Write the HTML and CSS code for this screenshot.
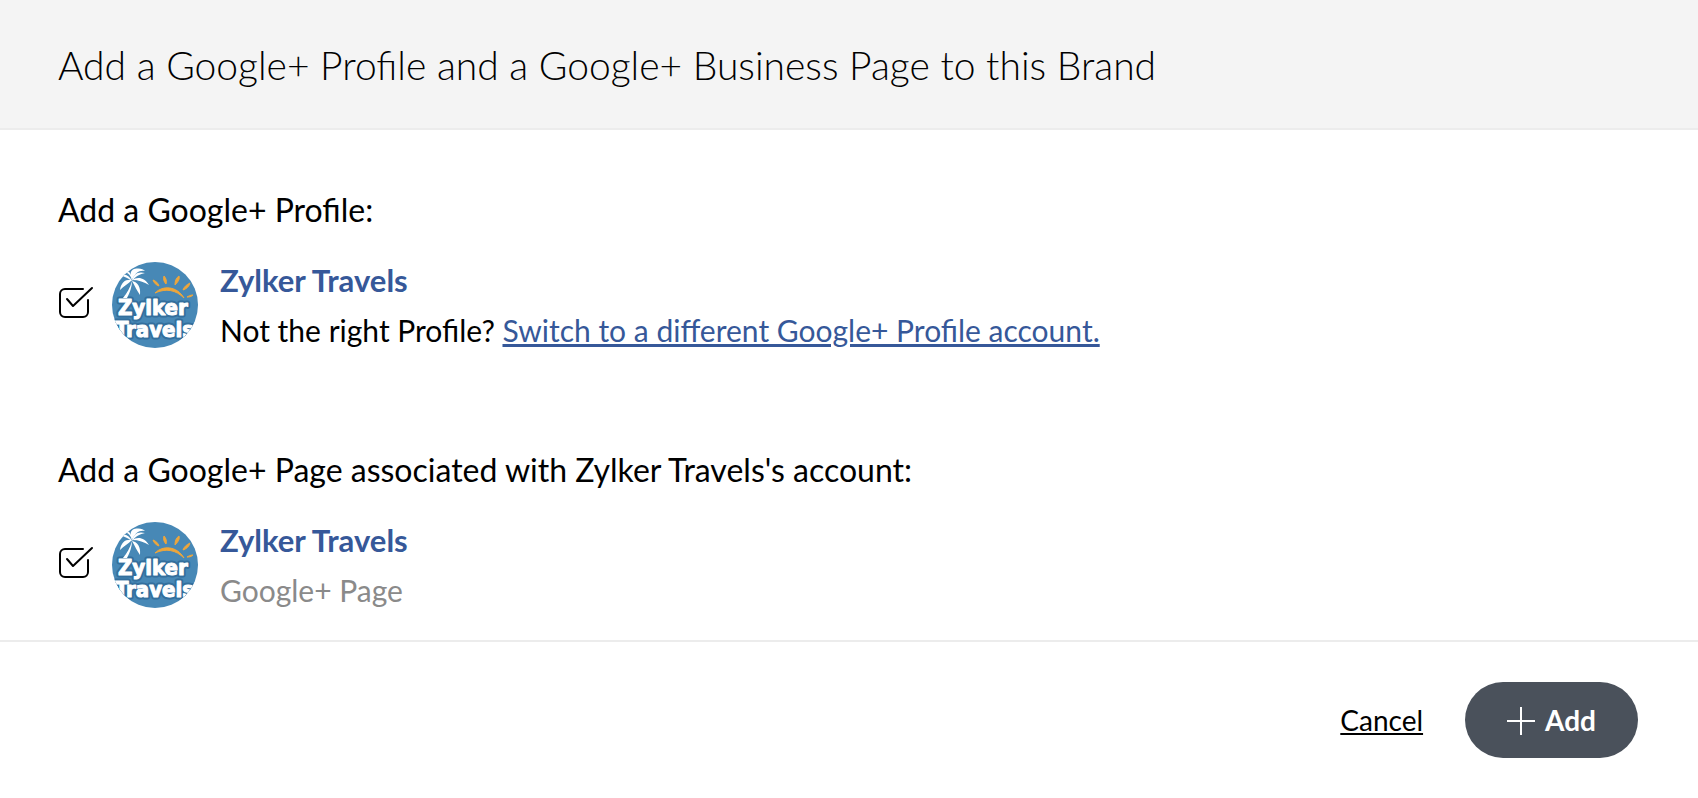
FILE: index.html
```html
<!DOCTYPE html>
<html lang="en">
<head>
    <meta charset="UTF-8">
    <meta name="viewport" content="width=device-width, initial-scale=1.0">
    <title>Add a Google+ Profile</title>
    <link rel="stylesheet" href="styles.css">
</head>
<body>
    <!-- Shared brand logo -->
    <svg class="symbols" aria-hidden="true">
        <symbol id="zylker-logo" viewBox="0 0 86 86">
            <rect width="86" height="86" fill="#4788b6"/>
            <g class="logo-shade">
                <text x="6" y="53">Zylker</text>
                <text x="3" y="75">Travels</text>
            </g>
            <g fill="#fff">
                <path d="M20 19C17 13 12 11 8 14c4 0 8 2 12 5z"/>
                <path d="M20 19C21 12 26 9 33 11c-5 1-9 3-13 8z"/>
                <path d="M20 18C18 12 18 9 22 7c6-1 9 0 11 2-6-1-10 2-13 9z"/>
                <path d="M20 18c-2-6-5-8-9-8 3-3 9 0 9 8z"/>
                <path d="M20 18c6-4 13-2 17 5-5-3-10-5-17-5z"/>
                <path d="M20 19c5 1 9 5 8 14-3-4-5-9-8-14z"/>
                <path d="M20 18C14 17 9 20 8 28c4-4 8-6 12-10z"/>
                <path d="M20 19c0 6-2 11-5 17h-4c4-5 7-10 9-17z"/>
            </g>
            <g fill="#eda63c" stroke="#eda63c" stroke-linejoin="round">
                <path d="M43 31c8-8 22-7 29 5-8-8-18-10-29-5z"/>
                <path d="M41 18c3 1 5 3 6 6-3-1-5-3-6-6z"/>
                <path d="M52 14c2 2 3 5 2 8-2-2-3-5-2-8z"/>
                <path d="M67 14c1 3-1 6-4 9 0-4 1-7 4-9z"/>
                <path d="M78 21c-1 4-4 6-7 7 1-3 3-5 7-7z"/>
                <path d="M81 33c-2 2-4 2-6 2 2-1 3-2 6-2z"/>
            </g>
            <g class="logo-text">
                <text x="6" y="53">Zylker</text>
                <text x="3" y="75">Travels</text>
            </g>
        </symbol>
    </svg>

    <header class="header">
        <h1>Add a Google+ Profile and a Google+ Business Page to this Brand</h1>
    </header>

    <main class="content">
        <section>
            <h2>Add a Google+ Profile:</h2>
            <div class="account">
                <span class="check">
                    <input type="checkbox" id="profile" checked>
                    <svg viewBox="0 0 36 38" aria-hidden="true">
                        <path d="M25 3H7a5 5 0 0 0-5 5v18a5 5 0 0 0 5 5h18a5 5 0 0 0 5-5V14"/>
                        <path class="tick" d="M9 13l6 7L34 2"/>
                    </svg>
                </span>
                <svg class="avatar" role="img" aria-label="Zylker Travels"><use href="#zylker-logo"/></svg>
                <div class="info">
                    <label class="name" for="profile">Zylker Travels</label>
                    <p>Not the right Profile? <a href="#">Switch to a different Google+ Profile account.</a></p>
                </div>
            </div>
        </section>

        <section>
            <h2>Add a Google+ Page associated with Zylker Travels's account:</h2>
            <div class="account">
                <span class="check">
                    <input type="checkbox" id="page" checked>
                    <svg viewBox="0 0 36 38" aria-hidden="true">
                        <path d="M25 3H7a5 5 0 0 0-5 5v18a5 5 0 0 0 5 5h18a5 5 0 0 0 5-5V14"/>
                        <path class="tick" d="M9 13l6 7L34 2"/>
                    </svg>
                </span>
                <svg class="avatar" role="img" aria-label="Zylker Travels"><use href="#zylker-logo"/></svg>
                <div class="info">
                    <label class="name" for="page">Zylker Travels</label>
                    <p class="type">Google+ Page</p>
                </div>
            </div>
        </section>
    </main>

    <footer class="footer">
        <a class="cancel" href="#">Cancel</a>
        <button class="add-button" type="button">
            <svg viewBox="0 0 28 28" aria-hidden="true"><path d="M0 15h28M14 1v28"/></svg>
            Add
        </button>
    </footer>
</body>
</html>
```

FILE: styles.css
```css
body {
    font-family: Lato, sans-serif;
    margin: 0;
    background-color: #fff;
    color: #000;
}

h1,
h2,
p {
    margin: 0;
    font-weight: 400;
}

.symbols {
    display: none;
}

.header {
    padding: 41px 58px 39px;
    background-color: #f4f4f4;
    border-bottom: 2px solid #ececec;
}

h1 {
    font-size: 39px;
    line-height: 48px;
    font-weight: 300;
}

.content {
    display: flex;
    flex-direction: column;
    gap: 95px;
    padding: 60px 58px 25px;
    border-bottom: 2px solid #ececec;
}

h2 {
    margin-bottom: 25px;
    font-size: 32px;
    line-height: 40px;
}

.account {
    display: flex;
    align-items: center;
}

/* Checkbox with its drawn box on top */
.check {
    display: grid;
    flex: none;
    width: 36px;
    height: 38px;
    margin-right: 18px;
}

.check input,
.check svg {
    grid-area: 1 / 1;
    width: 36px;
    height: 38px;
    margin: 0;
}

.check input {
    appearance: none;
    cursor: pointer;
}

.check svg {
    fill: none;
    stroke: #000;
    stroke-width: 2;
    stroke-linecap: round;
    stroke-linejoin: round;
    pointer-events: none;
}

.check input:not(:checked) + svg .tick {
    display: none;
}

.avatar {
    flex: none;
    width: 86px;
    height: 86px;
    margin-right: 22px;
    border-radius: 50%;
}

.logo-text,
.logo-shade {
    font-family: "DejaVu Sans Condensed", "DejaVu Sans", sans-serif;
    font-size: 22px;
    font-weight: 700;
    stroke-linejoin: round;
}

.logo-text {
    fill: #fff;
    stroke: #fff;
    stroke-width: 1;
}

.logo-shade {
    fill: #336f9d;
    stroke: #336f9d;
    stroke-width: 5;
}

.info {
    font-size: 30px;
    line-height: 50px;
}

.name {
    display: block;
    color: #365899;
    font-size: 31px;
    font-weight: 700;
    cursor: pointer;
}

.info a {
    color: #365899;
}

.type {
    color: #8a8a8a;
}

.footer {
    display: flex;
    justify-content: flex-end;
    align-items: center;
    gap: 42px;
    padding: 40px 60px;
    font-size: 28px;
}

.cancel {
    color: #000;
}

.add-button {
    display: flex;
    align-items: center;
    gap: 10px;
    height: 76px;
    padding: 0 42px;
    border: none;
    border-radius: 38px;
    background-color: #4a515b;
    color: #fff;
    font-family: inherit;
    font-size: 28px;
    font-weight: 700;
    cursor: pointer;
}

.add-button svg {
    width: 28px;
    height: 28px;
    overflow: visible;
    stroke: #fff;
    stroke-width: 2;
}
```
